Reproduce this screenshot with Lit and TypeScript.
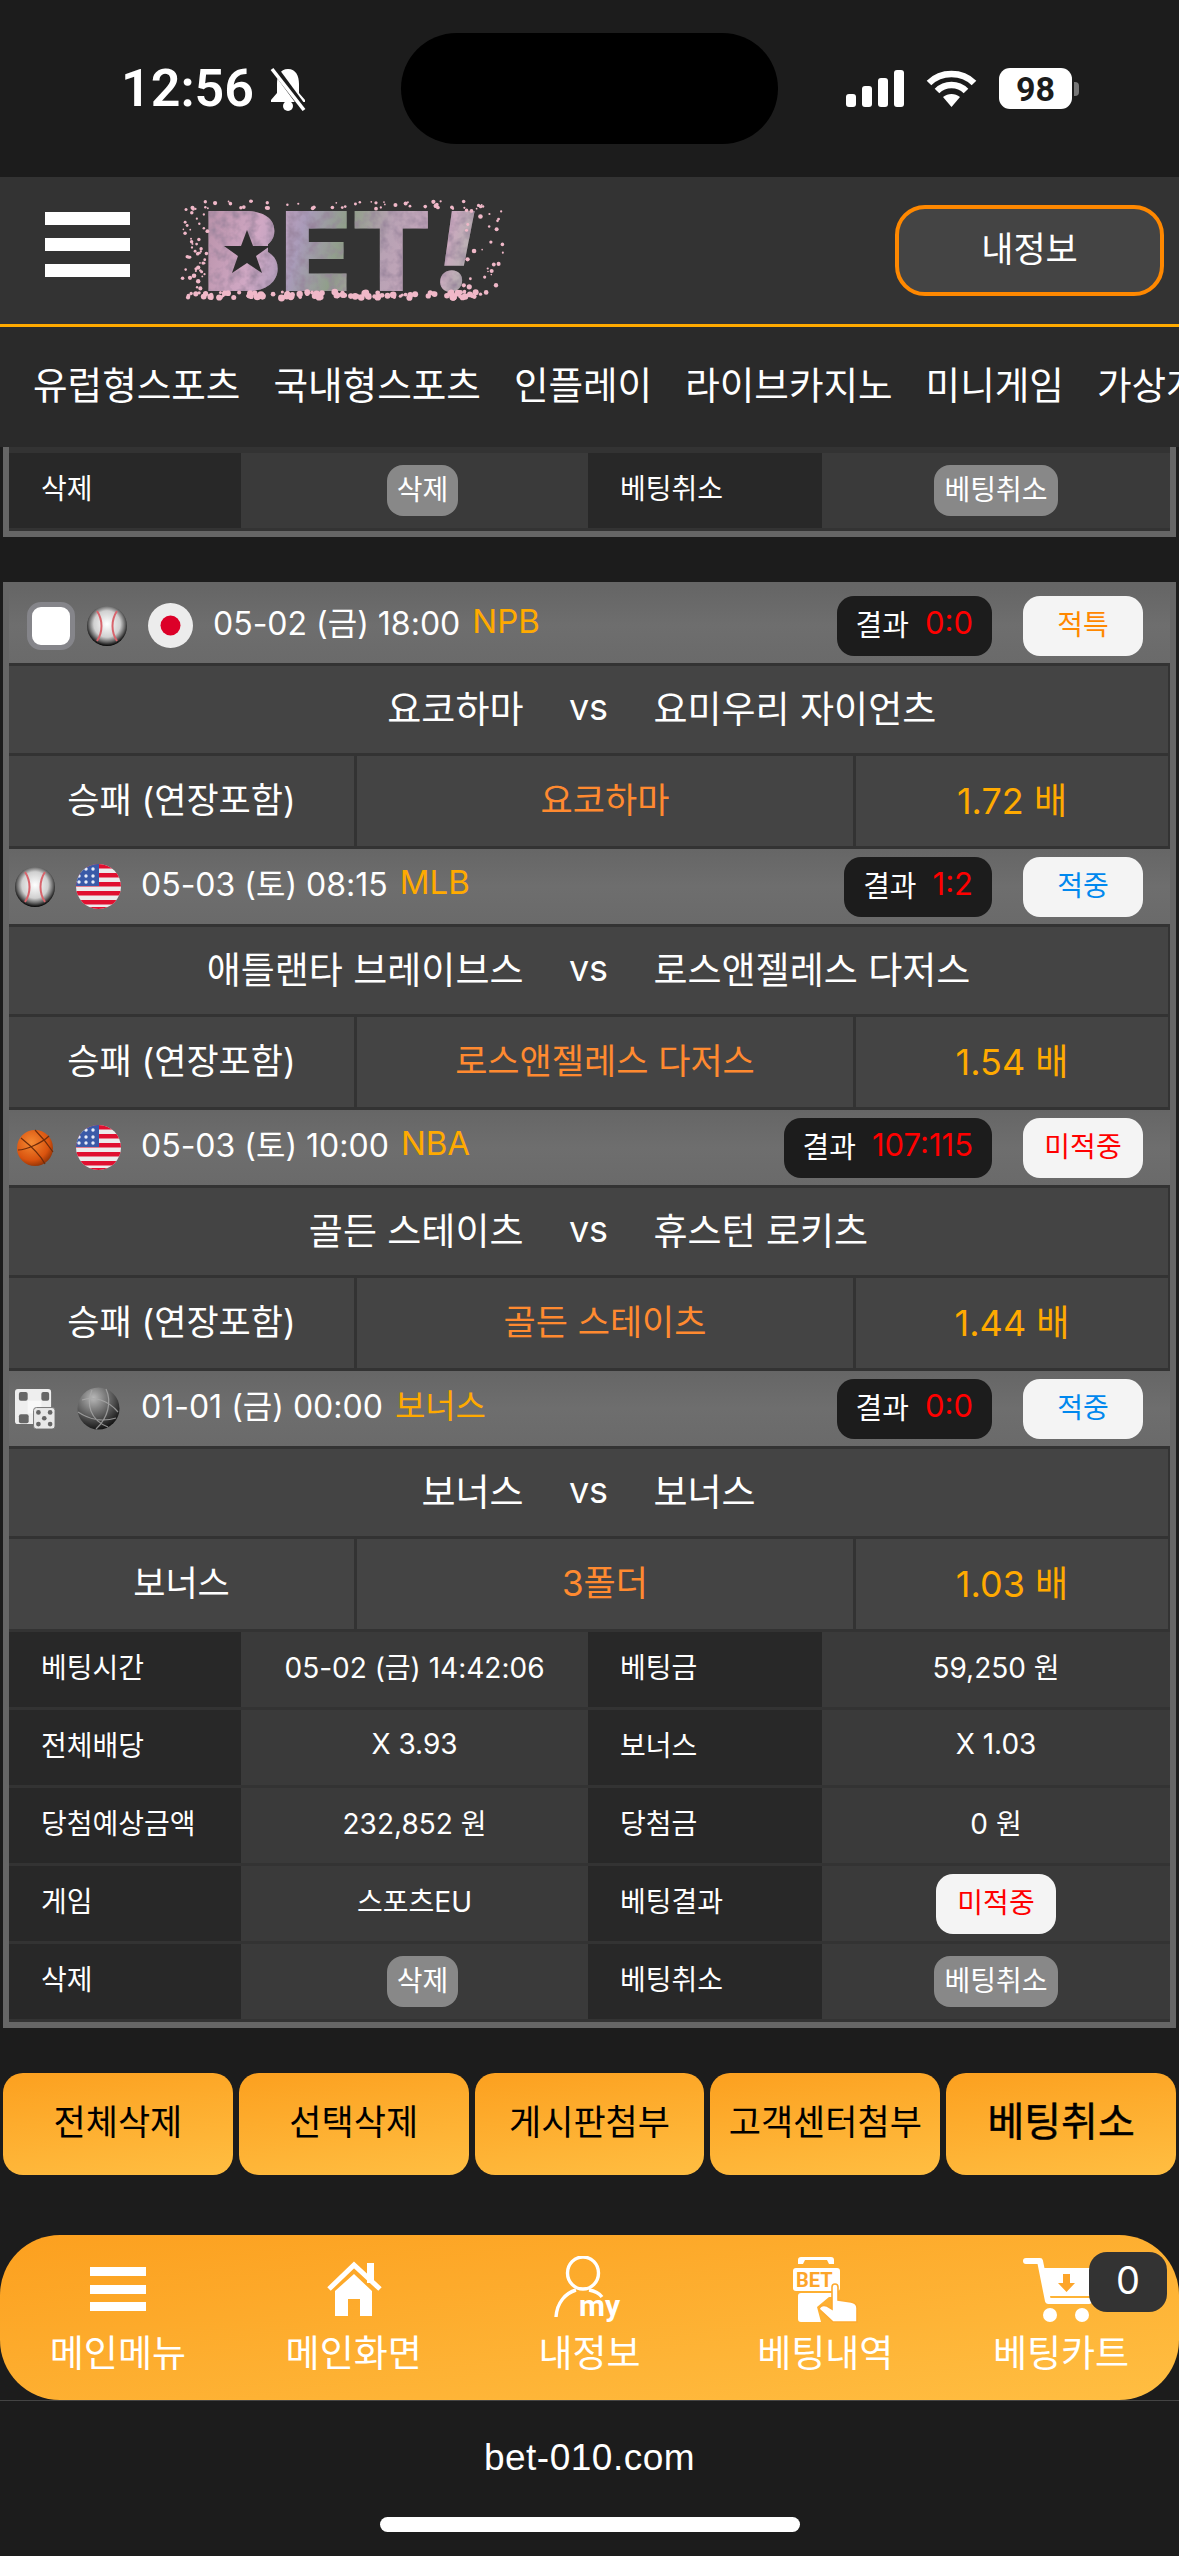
import { LitElement, css, html, svg } from 'lit';
import { customElement } from 'lit/decorators.js';

type Game = {
  check?: boolean;
  sport: string;
  flag: string;
  date: string;
  league: string;
  score: string;
  status: string;
  statusClass: string;
  home: string;
  away: string;
  market: string;
  pick: string;
  odds: string;
};

const GAMES: Game[] = [
  { check: true, sport: 'baseball', flag: 'jp', date: '05-02 (금) 18:00', league: 'NPB', score: '0:0', status: '적특', statusClass: 'void', home: '요코하마', away: '요미우리 자이언츠', market: '승패 (연장포함)', pick: '요코하마', odds: '1.72 배' },
  { sport: 'baseball', flag: 'us', date: '05-03 (토) 08:15', league: 'MLB', score: '1:2', status: '적중', statusClass: 'win', home: '애틀랜타 브레이브스', away: '로스앤젤레스 다저스', market: '승패 (연장포함)', pick: '로스앤젤레스 다저스', odds: '1.54 배' },
  { sport: 'basketball', flag: 'us', date: '05-03 (토) 10:00', league: 'NBA', score: '107:115', status: '미적중', statusClass: 'lose', home: '골든 스테이츠', away: '휴스턴 로키츠', market: '승패 (연장포함)', pick: '골든 스테이츠', odds: '1.44 배' },
  { sport: 'dice', flag: 'globe', date: '01-01 (금) 00:00', league: '보너스', score: '0:0', status: '적중', statusClass: 'win', home: '보너스', away: '보너스', market: '보너스', pick: '3폴더', odds: '1.03 배' },
];

const INFO = [
  ['베팅시간', '05-02 (금) 14:42:06', '베팅금', '59,250 원'],
  ['전체배당', 'X 3.93', '보너스', 'X 1.03'],
  ['당첨예상금액', '232,852 원', '당첨금', '0 원'],
];

const ACTIONS = ['전체삭제', '선택삭제', '게시판첨부', '고객센터첨부', '베팅취소'];
const NAV = ['유럽형스포츠', '국내형스포츠', '인플레이', '라이브카지노', '미니게임', '가상게임'];

// same petals on every render
function petals() {
  let seed = 7;
  const rnd = () => {
    seed = (seed * 16807) % 2147483647;
    return seed / 2147483647;
  };
  const out = [];
  for (let i = 0; i < 110; i++) {
    out.push([10 + rnd() * 300, 92 + rnd() * 6, 1.5 + rnd() * 2]);
  }
  for (let i = 0; i < 50; i++) {
    out.push([14 + rnd() * 300, 1 + rnd() * 8, 0.8 + rnd() * 1.4]);
  }
  for (let i = 0; i < 50; i++) {
    out.push([4 + rnd() * 26, 5 + rnd() * 85, 0.8 + rnd() * 1.5]);
  }
  for (let i = 0; i < 30; i++) {
    out.push([285 + rnd() * 40, 5 + rnd() * 88, 0.8 + rnd() * 1.8]);
  }
  return out;
}

const logo = svg`
  <svg class="logo" viewBox="0 0 327 101" width="327" height="101">
    <defs>
      <linearGradient id="lg" gradientUnits="userSpaceOnUse" x1="25" y1="10" x2="312" y2="90">
        <stop offset="0" stop-color="#b891a8"/>
        <stop offset=".2" stop-color="#d0a8c4"/>
        <stop offset=".34" stop-color="#a99bb9"/>
        <stop offset=".48" stop-color="#8f9f88"/>
        <stop offset=".62" stop-color="#b8a2b4"/>
        <stop offset=".82" stop-color="#cba9bf"/>
        <stop offset="1" stop-color="#9dbb9f"/>
      </linearGradient>
      <filter id="lt" x="-5%" y="-5%" width="110%" height="110%">
        <feTurbulence type="fractalNoise" baseFrequency=".1" numOctaves="3" seed="4"/>
        <feColorMatrix values="0 0 0 0 .3  0 0 0 0 .22  0 0 0 0 .32  0 0 0 1.8 -.7"/>
        <feComposite in2="SourceGraphic" operator="in" result="n"/>
        <feMerge><feMergeNode in="SourceGraphic"/><feMergeNode in="n"/></feMerge>
      </filter>
    </defs>
    <g filter="url(#lt)">
      <text x="25" y="91" font-family="Inter" font-weight="900" font-size="110" textLength="228" lengthAdjust="spacingAndGlyphs" fill="url(#lg)">BET</text>
      <text x="256" y="91" font-family="Inter" font-weight="900" font-size="110" fill="url(#lg)" font-style="italic">!</text>
      <rect x="38" y="24" width="52" height="56" fill="url(#lg)"/>
    </g>
    <polygon points="69,30 75,46 92,46 78,56 84,73 69,63 54,73 60,56 46,46 63,46" fill="#2c2c2c"/>
    ${petals().map(([x, y, r]) => svg`<circle cx=${x} cy=${y} r=${r} fill="#f0b8c8"/>`)}
  </svg>`;

const sportIcon = (name: string) => {
  if (name === 'baseball') {
    return svg`<svg class="ico" viewBox="0 0 40 40">
      <defs><radialGradient id="bb" cx=".5" cy=".45" r=".55"><stop offset="0" stop-color="#fff"/><stop offset=".6" stop-color="#d0d0d0"/><stop offset=".82" stop-color="#666"/><stop offset="1" stop-color="#000"/></radialGradient></defs>
      <circle cx="20" cy="20" r="20" fill="url(#bb)"/>
      <path d="M10 5C16 14 16 26 10 35M30 5C24 14 24 26 30 35" fill="none" stroke="#d8646c" stroke-width="2"/>
    </svg>`;
  }
  if (name === 'basketball') {
    return svg`<svg class="ico" viewBox="0 0 40 40">
      <defs><radialGradient id="bk" cx=".4" cy=".35" r=".7"><stop offset="0" stop-color="#f58a32"/><stop offset=".7" stop-color="#d9530f"/><stop offset="1" stop-color="#8a3006"/></radialGradient></defs>
      <circle cx="20" cy="20" r="18" fill="url(#bk)"/>
      <path d="M6 10C16 18 26 28 30 36M3 22C12 22 28 14 34 8M20 2C28 10 34 18 38 24" fill="none" stroke="#6e2c0a" stroke-width="1.2"/>
    </svg>`;
  }
  return svg`<svg class="ico" viewBox="0 0 41 41">
    <rect x="0" y="0" width="37" height="36" rx="3" fill="#eee"/>
    <rect x="4" y="3" width="9" height="9" rx="2" fill="#666"/>
    <rect x="27" y="3" width="8" height="9" rx="2" fill="#666"/>
    <rect x="4" y="26" width="10" height="9" rx="2" fill="#666"/>
    <rect x="13" y="12" width="14" height="13" fill="#f8f8f8"/>
    <rect x="19" y="19" width="22" height="22" rx="3" fill="#e8e8e8" stroke="#777" stroke-width="1"/>
    ${[[24, 24], [36, 24], [30, 30], [24, 36], [36, 36]].map(([x, y]) => svg`<circle cx=${x} cy=${y} r="2.4" fill="#666"/>`)}
  </svg>`;
};

const flagIcon = (name: string) => {
  if (name === 'jp') {
    return svg`<svg class="flag" viewBox="0 0 45 45"><circle cx="22.5" cy="22.5" r="22.5" fill="#ececec"/><circle cx="22.5" cy="22.5" r="10" fill="#dc0028"/></svg>`;
  }
  if (name === 'us') {
    const stripes = [0, 9, 18, 27, 36, 43];
    return svg`<svg class="flag" viewBox="0 0 45 45">
      <defs><clipPath id="fc"><circle cx="22.5" cy="22.5" r="22.5"/></clipPath></defs>
      <g clip-path="url(#fc)">
        <rect width="45" height="45" fill="#ececec"/>
        ${stripes.map((y) => svg`<rect x="0" y=${y} width="45" height="4.5" fill="#e01030"/>`)}
        <rect width="23" height="22" fill="#3a5aa8"/>
        ${[5, 12, 18].map((y) => [3, 10, 17].map((x) => svg`<circle cx=${x} cy=${y} r="1.7" fill="#e8ecf8"/>`))}
      </g>
    </svg>`;
  }
  return svg`<svg class="flag" viewBox="0 0 45 45">
    <defs><radialGradient id="gl" cx=".38" cy=".25" r=".8"><stop offset="0" stop-color="#b8b8b8"/><stop offset=".55" stop-color="#5c5c5c"/><stop offset="1" stop-color="#0c0c0c"/></radialGradient></defs>
    <circle cx="22.5" cy="22.5" r="21" fill="url(#gl)"/>
    <path d="M6 14C18 10 32 14 42 26M16 4C10 18 14 34 32 41M30 3C36 16 32 32 20 43M2 26C14 34 28 36 40 32" fill="none" stroke="#aaa" stroke-width="1.2" opacity=".8"/>
  </svg>`;
};

const navIcons = [
  svg`<svg class="nav-ico" viewBox="0 0 80 70"><g fill="#fff"><rect x="12" y="11" width="56" height="9"/><rect x="12" y="29" width="56" height="9"/><rect x="12" y="46" width="56" height="9"/></g></svg>`,
  svg`<svg class="nav-ico" viewBox="0 0 80 70"><g fill="#fff"><path d="M21 35L40 18 58 35V60H46V43H34V60H21Z"/><rect x="53" y="7" width="7" height="20"/></g><path d="M15 33L40 9 66 33" fill="none" stroke="#fff" stroke-width="5"/></svg>`,
  svg`<svg class="nav-ico" viewBox="0 0 80 70">
    <g fill="none" stroke="#fff" stroke-width="3.4"><ellipse cx="34" cy="17" rx="15.5" ry="16"/><path d="M7 61C8 46 17 37 27 34M40 34C46 35 50 37 53 41"/></g>
    <text x="30" y="60" font-family="Roboto" font-weight="700" font-size="30" fill="#fff">my</text>
  </svg>`,
  svg`<svg class="nav-ico" viewBox="0 0 80 70">
    <path d="M13 8V4Q13 1 16 1H46Q49 1 49 4V8H44L42 4H20L18 8Z" fill="#fff"/>
    <rect x="8" y="12" width="47" height="23" rx="3" fill="#fff"/>
    <text x="11" y="31" font-family="Roboto" font-weight="700" font-size="20" fill="#fda52a">BET</text>
    <path d="M16 37H49V41H44L32 51 36 66H16Q13 66 13 63V40Q13 37 16 37Z" fill="#fff"/>
    <path d="M50 28Q53 28 53 31V44L66 46Q72 47 72 52V66H48L34 53Q36 48 42 50L47 53V31Q47 28 50 28Z" fill="#fff" stroke="#fdaa30" stroke-width="1.6"/>
  </svg>`,
  svg`<svg class="nav-ico" viewBox="0 0 80 70">
    <path d="M5 5H19L27 45H68" fill="none" stroke="#fff" stroke-width="6" stroke-linejoin="round" stroke-linecap="round"/>
    <path d="M21 12H72V40H26Z" fill="#fff"/>
    <path d="M42 18H49V27H54L45.5 36 37 27H42Z" fill="#fda52a"/>
    <circle cx="29" cy="59" r="7" fill="#fff"/><circle cx="61" cy="59" r="7" fill="#fff"/>
  </svg>`,
];

@customElement('app-root')
export class AppRoot extends LitElement {
  static styles = css`
    :host {
      display: block;
      width: 1179px;
      height: 2556px;
      overflow: hidden;
      background: #1c1c1c;
      color: #fff;
      font-family: Inter, 'Noto Sans CJK KR', sans-serif;
    }
    .status {
      height: 177px;
      box-sizing: border-box;
      padding-top: 33px;
      display: flex;
      align-items: flex-start;
      position: relative;
    }
    .status-left {
      width: 401px;
      height: 111px;
      box-sizing: border-box;
      padding-left: 121px;
      display: flex;
      align-items: center;
      gap: 14px;
    }
    .time {
      font: 600 52px Roboto, sans-serif;
    }
    .island {
      width: 377px;
      height: 111px;
      border-radius: 56px;
      background: #000;
    }
    .status-right {
      height: 111px;
      box-sizing: border-box;
      padding-left: 68px;
      display: flex;
      align-items: center;
      gap: 22px;
    }
    .battery {
      width: 73px;
      height: 41px;
      border-radius: 11px;
      background: #fff;
      color: #1c1c1c;
      font: 700 34px Roboto, sans-serif;
      display: flex;
      align-items: center;
      justify-content: center;
      margin-right: -20px;
    }
    .nub {
      width: 5px;
      height: 14px;
      border-radius: 0 4px 4px 0;
      background: #777;
    }
    .topbar {
      height: 147px;
      background: #333;
      border-bottom: 3px solid #fa0;
      display: flex;
      align-items: center;
      padding: 0 15px 0 45px;
    }
    .burger {
      width: 85px;
      display: flex;
      flex-direction: column;
      gap: 13px;
      margin: -13px 48px 0 0;
    }
    .burger i {
      display: block;
      height: 13px;
      background: #fff;
    }
    .logo {
      display: block;
      overflow: visible;
    }
    .my {
      margin-left: auto;
      width: 269px;
      height: 91px;
      box-sizing: border-box;
      border: 4px solid #f80;
      border-radius: 30px;
      background: #444;
      padding-bottom: 8px;
      display: flex;
      align-items: center;
      justify-content: center;
      font-size: 35px;
    }
    .nav {
      height: 120px;
      background: #2a2a2a;
      display: flex;
      align-items: center;
      gap: 33px;
      padding: 0 0 10px 33px;
      box-sizing: border-box;
      white-space: nowrap;
      overflow: hidden;
      font-size: 37.6px;
    }
    .box {
      margin: 0 3px;
      border: 6px solid #666;
      background: #333;
    }
    .box.cut {
      border-top: 0;
      padding-top: 6px;
      margin-bottom: 45px;
    }
    .game-head {
      height: 75px;
      background: linear-gradient(#666, #6e6e6e 50%, #6a6a6a);
      display: flex;
      align-items: center;
      padding-left: 6px;
    }
    .check {
      width: 48px;
      height: 48px;
      box-sizing: border-box;
      border: 5px solid #85858a;
      border-radius: 14px;
      background: #fff;
      margin: 0 12px;
    }
    .ico {
      width: 40px;
      height: 40px;
      display: block;
    }
    .flag {
      width: 45px;
      height: 45px;
      display: block;
      margin: 0 20px 0 21px;
    }
    .date {
      font-size: 32px;
      padding-bottom: 9px;
    }
    .league {
      color: #fa0;
      font-size: 33px;
      margin-left: 12px;
      padding-bottom: 9px;
    }
    .result {
      margin-left: auto;
      height: 60px;
      padding: 0 19px 6px;
      box-sizing: border-box;
      border-radius: 17px;
      background: #1c1c1c;
      display: flex;
      align-items: center;
      gap: 16px;
      font-size: 29px;
    }
    .result b {
      color: #f00;
      font-weight: 400;
      font-size: 31px;
    }
    .pill {
      width: 120px;
      height: 60px;
      box-sizing: border-box;
      padding-bottom: 6px;
      border-radius: 17px;
      background: #f4f4f4;
      display: flex;
      align-items: center;
      justify-content: center;
      font-size: 28px;
    }
    .game-head .pill {
      margin: 0 27px 0 31px;
    }
    .void {
      color: #f80;
    }
    .win {
      color: #08e;
    }
    .lose {
      color: #f00;
    }
    .versus {
      margin-top: 3px;
      height: 87px;
      margin-right: 2px;
      padding-bottom: 6px;
      box-sizing: border-box;
      background: #444;
      display: grid;
      grid-template-columns: 1fr auto 1fr;
      align-items: center;
      gap: 45px;
      font-size: 37px;
    }
    .versus span:first-child {
      text-align: right;
    }
    .vs {
      font-size: 36px;
      width: 40px;
      text-align: center;
    }
    .pick {
      margin: 3px 2px 3px 0;
      height: 90px;
      display: grid;
      grid-template-columns: 345px 496px 312px;
      gap: 3px;
    }
    .pick div {
      background: #444;
      display: flex;
      align-items: center;
      justify-content: center;
      font-size: 35px;
      padding-bottom: 7px;
      box-sizing: border-box;
    }
    .pick .team {
      color: #ff8a30;
    }
    .pick .odds {
      color: #fa0;
      font-size: 36px;
    }
    .info {
      display: grid;
      grid-template-columns: 232px 347px 234px 348px;
      grid-auto-rows: 75px;
      row-gap: 3px;
      padding-bottom: 3px;
      font-size: 28px;
    }
    .info > div {
      display: flex;
      align-items: center;
      background: #3a3a3a;
      justify-content: center;
      padding-bottom: 8px;
      box-sizing: border-box;
    }
    .info > .label {
      background: #282828;
      justify-content: flex-start;
      padding-left: 32px;
    }
    .info > .ctrl {
      padding-bottom: 0;
    }
    .btn-grey {
      height: 51px;
      padding: 0 10px 6px;
      box-sizing: border-box;
      border-radius: 16px;
      background: #888;
      display: flex;
      align-items: center;
    }
    .btn-grey.shift {
      margin-left: 16px;
    }
    .actions {
      margin: 45px 3px 60px;
      display: grid;
      grid-template-columns: repeat(5, 1fr);
      gap: 6px;
    }
    .actions div {
      height: 102px;
      border-radius: 20px;
      background: linear-gradient(172deg, #fca01f, #ffbe42);
      color: #000;
      display: flex;
      align-items: center;
      justify-content: center;
      font-size: 35px;
      padding-bottom: 10px;
      box-sizing: border-box;
    }
    .actions div:last-child {
      font-size: 40px;
      -webkit-text-stroke: 0.5px #000;
    }
    .bottom {
      position: relative;
      height: 165px;
      box-sizing: border-box;
      padding-top: 21px;
      border-radius: 60px;
      background: linear-gradient(172deg, #fca01f, #ffbe42);
      display: grid;
      grid-template-columns: repeat(5, 1fr);
    }
    .bottom-item {
      display: flex;
      flex-direction: column;
      align-items: center;
      gap: 6px;
      font-size: 37px;
      line-height: 44px;
    }
    .nav-ico {
      display: block;
      width: 80px;
      height: 70px;
    }
    .cart-count {
      position: absolute;
      left: 1089px;
      top: 17px;
      width: 78px;
      height: 60px;
      padding-bottom: 4px;
      box-sizing: border-box;
      border-radius: 18px;
      background: #333;
      display: flex;
      align-items: center;
      justify-content: center;
      font-size: 38px;
    }
    .footer {
      height: 155px;
      box-sizing: border-box;
      border-top: 1px solid #444;
      padding-top: 32px;
      display: flex;
      flex-direction: column;
      align-items: center;
      font: 37px/50px 'Liberation Sans', sans-serif;
      letter-spacing: 0.5px;
    }
    .home-bar {
      width: 420px;
      height: 15px;
      border-radius: 8px;
      background: #fff;
      margin-top: 34px;
    }
  `;

  private renderGame(g: Game) {
    return html`
      <div class="game-head">
        ${g.check ? html`<div class="check"></div>` : ''}
        ${sportIcon(g.sport)} ${flagIcon(g.flag)}
        <span class="date">${g.date}</span>
        <span class="league">${g.league}</span>
        <div class="result"><span>결과</span><b>${g.score}</b></div>
        <div class="pill ${g.statusClass}">${g.status}</div>
      </div>
      <div class="versus">
        <span>${g.home}</span>
        <span class="vs">vs</span>
        <span>${g.away}</span>
      </div>
      <div class="pick">
        <div>${g.market}</div>
        <div class="team">${g.pick}</div>
        <div class="odds">${g.odds}</div>
      </div>
    `;
  }

  private renderDeleteRow() {
    return html`
      <div class="label">삭제</div>
      <div class="ctrl"><span class="btn-grey shift">삭제</span></div>
      <div class="label">베팅취소</div>
      <div class="ctrl"><span class="btn-grey">베팅취소</span></div>
    `;
  }

  render() {
    return html`
      <div class="status">
        <div class="status-left">
          <span class="time">12:56</span>
          <svg width="40" height="44" viewBox="0 0 40 44">
            <path d="M20 2C12 2 9 9 9 17V26L3 33V35H37V33L31 26V17C31 9 28 2 20 2Z" fill="#fff"/>
            <circle cx="20" cy="39" r="5" fill="#fff"/>
            <path d="M6 1L37 43" stroke="#1c1c1c" stroke-width="7"/>
            <path d="M4 2L36 43" stroke="#fff" stroke-width="3.5"/>
          </svg>
        </div>
        <div class="island"></div>
        <div class="status-right">
          <svg width="58" height="37" viewBox="0 0 58 37">
            <g fill="#fff"><rect x="0" y="24" width="10" height="13" rx="3"/><rect x="16" y="16" width="10" height="21" rx="3"/><rect x="32" y="8" width="10" height="29" rx="3"/><rect x="48" y="0" width="10" height="37" rx="3"/></g>
          </svg>
          <svg width="51" height="38" viewBox="0 0 51 38">
            <g fill="none" stroke="#fff" stroke-width="6.5"><path d="M3 13C15 1 36 1 48 13"/><path d="M11 21C19 13 32 13 40 21"/></g>
            <path d="M17 27C22 23 29 23 34 27L25.5 37Z" fill="#fff"/>
          </svg>
          <div class="battery">98</div>
          <div class="nub"></div>
        </div>
      </div>

      <div class="topbar">
        <div class="burger"><i></i><i></i><i></i></div>
        ${logo}
        <div class="my">내정보</div>
      </div>

      <div class="nav">${NAV.map((n) => html`<span>${n}</span>`)}</div>

      <div class="box cut">
        <div class="info">${this.renderDeleteRow()}</div>
      </div>

      <div class="box">
        ${GAMES.map((g) => this.renderGame(g))}
        <div class="info">
          ${INFO.map(
            (row) => html`
              <div class="label">${row[0]}</div>
              <div>${row[1]}</div>
              <div class="label">${row[2]}</div>
              <div>${row[3]}</div>
            `
          )}
          <div class="label">게임</div>
          <div>스포츠EU</div>
          <div class="label">베팅결과</div>
          <div class="ctrl"><span class="pill lose">미적중</span></div>
          ${this.renderDeleteRow()}
        </div>
      </div>

      <div class="actions">${ACTIONS.map((a) => html`<div>${a}</div>`)}</div>

      <div class="bottom">
        ${['메인메뉴', '메인화면', '내정보', '베팅내역', '베팅카트'].map(
          (label, i) => html`<div class="bottom-item">${navIcons[i]}<span>${label}</span></div>`
        )}
        <div class="cart-count">0</div>
      </div>

      <div class="footer">
        <span>bet-010.com</span>
        <div class="home-bar"></div>
      </div>
    `;
  }
}
